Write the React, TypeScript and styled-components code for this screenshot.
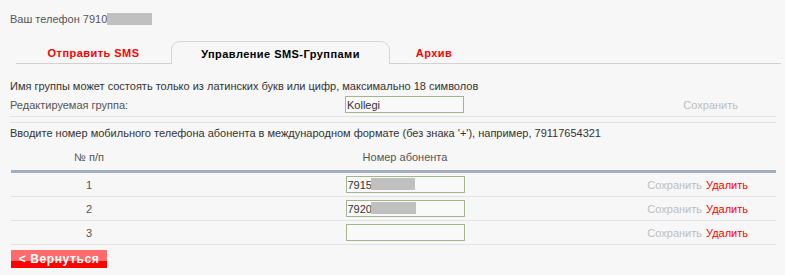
import React from "react";
import styled, { createGlobalStyle } from "styled-components";

const Global = createGlobalStyle`
  html, body { margin: 0; padding: 0; background: #f7f7f7; }
  body {
    font-family: "Liberation Sans", Arial, sans-serif;
    font-size: 11px;
    color: #4a4a4a;
  }
`;

const Page = styled.div`
  padding: 13px 4px 0 10px;
  width: 785px;
  box-sizing: border-box;
`;

const PhoneLine = styled.div`
  height: 12px;
  line-height: 12px;
  display: flex;
  align-items: center;
  color: #555;
`;

const Mask = styled.span<{ $w: number; $h: number }>`
  display: inline-block;
  width: ${(p) => p.$w}px;
  height: ${(p) => p.$h}px;
  background: #c0c0c0;
`;

const TabBar = styled.div`
  display: flex;
  margin: 16px 0 0 6px;
  height: 23px;
`;

const Tab = styled.div<{ $active?: boolean; $w?: number }>`
  ${(p) => (p.$w ? `width: ${p.$w}px;` : "flex: 1;")}
  box-sizing: border-box;
  display: flex;
  align-items: center;
  justify-content: center;
  font-weight: bold;
  font-size: 11px;
  letter-spacing: 0.45px;
  padding-top: 1px;
  color: ${(p) => (p.$active ? "#000" : "#ff0000")};
  ${(p) =>
    p.$active
      ? `border: 1px solid #d6d6d6; border-bottom: none; border-radius: 9px 9px 0 0;`
      : `border-bottom: 1px solid #d2d2d2;`}
`;

const Info = styled.div`
  margin-top: 16px;
  height: 12px;
  line-height: 12px;
  color: #333;
`;

const GroupRow = styled.div`
  display: grid;
  grid-template-columns: 335px 119px 1fr;
  align-items: center;
  height: 23px;
  margin-top: 1px;
  margin-right: 5px;
  border-bottom: 1px solid #e2e2e8;
  color: #555;
`;

const Separator = styled.div`
  margin-top: 5px;
  margin-right: 5px;
  border-top: 1px solid #e2e2e8;
`;

const SaveMuted = styled.span`
  color: #bdbdbd;
`;

const SaveRight = styled(SaveMuted)`
  justify-self: end;
  padding-right: 38px;
`;

const Field = styled.div`
  position: relative;
  width: 119px;
  height: 17px;
`;

const Input = styled.input`
  box-sizing: border-box;
  width: 119px;
  height: 17px;
  margin: 0;
  border: 1px solid #a5b48e;
  background: #f9f9f9;
  font-family: "Liberation Sans", Arial, sans-serif;
  font-size: 11px;
  color: #333;
  padding: 0 0 0 1px;
  outline: none;
`;

const FieldMask = styled.span<{ $l: number; $w: number }>`
  position: absolute;
  top: 2px;
  left: ${(p) => p.$l}px;
  width: ${(p) => p.$w}px;
  height: 12px;
  background: #c0c0c0;
`;

const Hint = styled.div`
  margin-top: 4px;
  height: 12px;
  line-height: 12px;
  color: #333;
`;

const Table = styled.div`
  margin: 10px 5px 0 1px;
`;

const Cols = styled.div`
  display: grid;
  grid-template-columns: 156px 476px 1fr;
  align-items: center;
`;

const Head = styled(Cols)`
  height: 19px;
  padding-top: 2px;
  border-bottom: 3px solid #a2afbd;
  color: #555;
  align-items: start;
`;

const Row = styled(Cols)`
  height: 23px;
  border-bottom: 1px solid #e2e2e8;
  color: #555;
`;

const Center = styled.div`
  display: flex;
  justify-content: center;
`;

const Actions = styled.div`
  justify-self: end;
  padding-right: 28px;
  font-size: 11px;
  display: flex;
  gap: 4px;
`;

const Delete = styled.span`
  color: #ff0000;
`;

const BackButton = styled.button`
  display: block;
  margin: 5px 0 0 1px;
  width: 96px;
  height: 18px;
  border: none;
  padding: 0;
  background: linear-gradient(#ff6a6a 0, #ff6a6a 60%, #ff0000 60%, #ff0000 100%);
  color: #fff;
  font-family: "Liberation Sans", Arial, sans-serif;
  font-weight: bold;
  font-size: 12px;
  letter-spacing: 0.6px;
  text-align: center;
  cursor: pointer;
`;

const rows = [
  { n: 1, value: "7915", mask: { l: 25, w: 44 } },
  { n: 2, value: "7920", mask: { l: 25, w: 45 } },
  { n: 3, value: "", mask: null as null | { l: number; w: number } },
];

export default function App() {
  return (
    <>
      <Global />
      <Page>
        <PhoneLine>
          Ваш телефон 7910
          <Mask $w={45} $h={12} />
        </PhoneLine>
        <TabBar>
          <Tab $w={155}>Отправить SMS</Tab>
          <Tab $w={219} $active>
            Управление SMS-Группами
          </Tab>
          <Tab $w={88}>Архив</Tab>
          <Tab />
        </TabBar>
        <Info>
          Имя группы может состоять только из латинских букв или цифр, максимально 18 символов
        </Info>
        <GroupRow>
          <span>Редактируемая группа:</span>
          <Field>
            <Input readOnly value="Kollegi" />
          </Field>
          <SaveRight>Сохранить</SaveRight>
        </GroupRow>
        <Separator />
        <Hint>
          Вводите номер мобильного телефона абонента в международном формате (без знака '+'), например, 79117654321
        </Hint>
        <Table>
          <Head>
            <Center>№ п/п</Center>
            <Center>Номер абонента</Center>
            <div />
          </Head>
          {rows.map((r) => (
            <Row key={r.n}>
              <Center>{r.n}</Center>
              <Center>
                <Field>
                  <Input readOnly value={r.value} />
                  {r.mask && <FieldMask $l={r.mask.l} $w={r.mask.w} />}
                </Field>
              </Center>
              <Actions>
                <SaveMuted>Сохранить</SaveMuted>
                <Delete>Удалить</Delete>
              </Actions>
            </Row>
          ))}
        </Table>
        <BackButton>&lt; Вернуться</BackButton>
      </Page>
    </>
  );
}
